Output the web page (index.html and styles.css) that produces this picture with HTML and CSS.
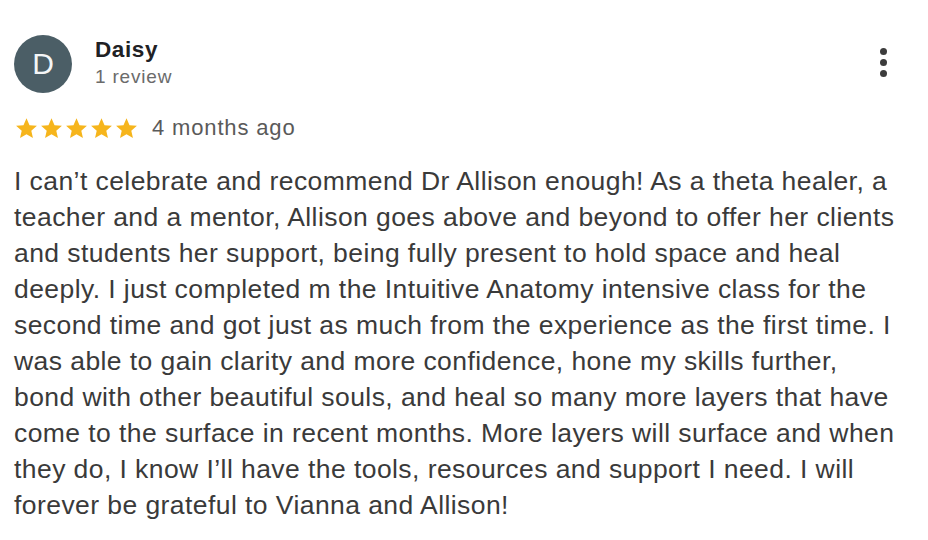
FILE: index.html
```html
<!DOCTYPE html>
<html>
<head>
<meta charset="utf-8">
<link rel="stylesheet" href="styles.css">
</head>
<body>
<div class="review">
  <div class="header">
    <div class="avatar">D</div>
    <div class="who">
      <div class="name">Daisy</div>
      <div class="count">1 review</div>
    </div>
    <div class="more"><span></span><span></span><span></span></div>
  </div>
  <div class="meta">
    <div class="stars">
      <svg viewBox="0 0 24 24"><path d="M12 2.2l2.9 6.6 7.1.6-5.4 4.7 1.6 7-6.2-3.7-6.2 3.7 1.6-7L2 9.4l7.1-.6z"/></svg>
      <svg viewBox="0 0 24 24"><path d="M12 2.2l2.9 6.6 7.1.6-5.4 4.7 1.6 7-6.2-3.7-6.2 3.7 1.6-7L2 9.4l7.1-.6z"/></svg>
      <svg viewBox="0 0 24 24"><path d="M12 2.2l2.9 6.6 7.1.6-5.4 4.7 1.6 7-6.2-3.7-6.2 3.7 1.6-7L2 9.4l7.1-.6z"/></svg>
      <svg viewBox="0 0 24 24"><path d="M12 2.2l2.9 6.6 7.1.6-5.4 4.7 1.6 7-6.2-3.7-6.2 3.7 1.6-7L2 9.4l7.1-.6z"/></svg>
      <svg viewBox="0 0 24 24"><path d="M12 2.2l2.9 6.6 7.1.6-5.4 4.7 1.6 7-6.2-3.7-6.2 3.7 1.6-7L2 9.4l7.1-.6z"/></svg>
    </div>
    <span class="date">4 months ago</span>
  </div>
  <p class="text">I can’t celebrate and recommend Dr Allison enough! As a theta healer, a<br>teacher and a mentor, Allison goes above and beyond to offer her clients<br>and students her support, being fully present to hold space and heal<br>deeply. I just completed m the Intuitive Anatomy intensive class for the<br>second time and got just as much from the experience as the first time. I<br>was able to gain clarity and more confidence, hone my skills further,<br>bond with other beautiful souls, and heal so many more layers that have<br>come to the surface in recent months. More layers will surface and when<br>they do, I know I’ll have the tools, resources and support I need. I will<br>forever be grateful to Vianna and Allison!</p>
</div>
</body>
</html>
```
FILE: styles.css
```css
html, body {
  margin: 0;
  background: #fff;
}
body {
  font-family: "Liberation Sans", Arial, sans-serif;
  width: 928px;
  height: 540px;
  overflow: hidden;
}
.review {
  padding: 35px 0 0 14px;
}
.header {
  display: flex;
  align-items: center;
}
.avatar {
  width: 58px;
  height: 58px;
  border-radius: 50%;
  background: #4b5e66;
  color: #f4f6f7;
  font-size: 30px;
  display: flex;
  align-items: center;
  justify-content: center;
  flex-shrink: 0;
}
.who {
  margin-left: 23px;
  flex: 1;
}
.name {
  font-weight: bold;
  font-size: 22.5px;
  letter-spacing: 0.6px;
  color: #202124;
  line-height: 28px;
  margin-top: -2px;
}
.count {
  font-size: 19px;
  letter-spacing: 0.8px;
  color: #6b6b6b;
  line-height: 26px;
}
.more {
  display: flex;
  flex-direction: column;
  gap: 4px;
  margin-right: 41px;
  margin-top: -4px;
}
.more span {
  width: 7px;
  height: 7px;
  border-radius: 50%;
  background: #3c3c3c;
}
.meta {
  display: flex;
  align-items: center;
  margin-top: 20px;
  height: 30px;
}
.stars {
  display: flex;
}
.stars svg {
  width: 25px;
  height: 25px;
  fill: #f6b51c;
}
.date {
  margin-left: 13px;
  font-size: 22px;
  letter-spacing: 0.85px;
  color: #5a5a5a;
}
.text {
  margin: 20px 0 0;
  width: 910px;
  font-size: 26.5px;
  letter-spacing: 0.43px;
  line-height: 36px;
  color: #3a3a3a;
  white-space: nowrap;
}
```
